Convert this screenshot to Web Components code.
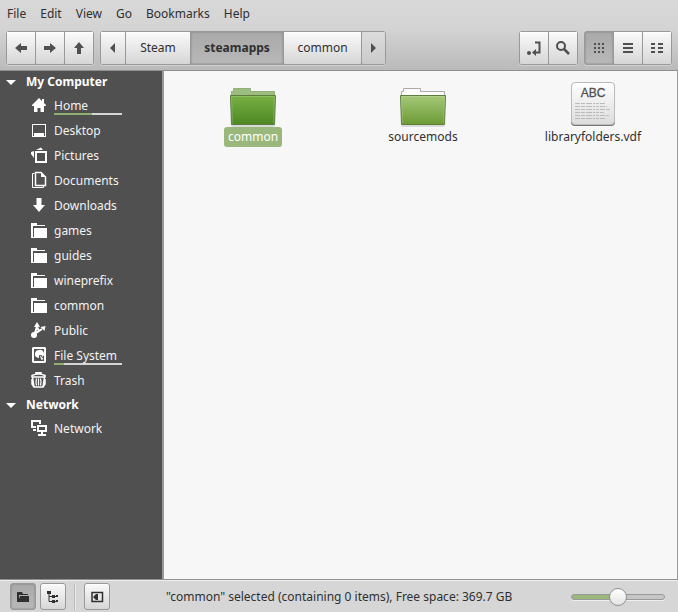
<!DOCTYPE html>
<html lang="en">
<head>
<meta charset="utf-8">
<title>steamapps</title>
<style>
html, body { height: 100%; }
body { margin: 0; font: 12px/20px "Noto Sans", sans-serif; color: #303030; background: #d6d6d6; }
</style>
</head>
<body>
<file-manager>
  <menu-bar slot="menu"></menu-bar>
  <tool-bar slot="tools"></tool-bar>
  <side-bar slot="side">
    <side-section label="My Computer">
      <side-item icon="home" style="--used:56%" usage>Home</side-item>
      <side-item icon="desktop">Desktop</side-item>
      <side-item icon="pictures">Pictures</side-item>
      <side-item icon="documents">Documents</side-item>
      <side-item icon="downloads">Downloads</side-item>
      <side-item icon="folder">games</side-item>
      <side-item icon="folder">guides</side-item>
      <side-item icon="folder">wineprefix</side-item>
      <side-item icon="folder">common</side-item>
      <side-item icon="public">Public</side-item>
      <side-item icon="disk" style="--used:14%" usage>File System</side-item>
      <side-item icon="trash">Trash</side-item>
    </side-section>
    <side-section label="Network">
      <side-item icon="network">Network</side-item>
    </side-section>
  </side-bar>
  <file-grid slot="files">
    <file-item icon="bigopen" selected>common</file-item>
    <file-item icon="bigfolder">sourcemods</file-item>
    <file-item icon="textfile">libraryfolders.vdf</file-item>
  </file-grid>
  <status-bar slot="status">"common" selected (containing 0 items), Free space: 369.7 GB</status-bar>
</file-manager>
<script>
const bigFolder = (a, b, tab, line) => `<defs><linearGradient id="g" x2="0" y2="1"><stop stop-color="${a}"/><stop offset="1" stop-color="${b}"/></linearGradient></defs>
<g transform="translate(0 2)"><path d="M2.500 41.500h43" stroke="#000" stroke-opacity=".12" stroke-width="3"/>
<path d="M2.500 14V7.500H4.500V4.500H21.500V7.500H45.500V14" fill="${tab}" stroke="${line}"/>
<path d="M1.500 11.500H46.500L45.500 40.500H2.500Z" fill="url(#g)" stroke="#5c7d3c"/>
<path d="M2.500 12.500H45.500M2.500 12.500L3.500 39.500M45.500 12.500L44.500 39.500" stroke="#fff" stroke-opacity=".18" fill="none"/></g>`;
const icons = {
  left: [16, '<path d="M2 8l6-5v3h6v4H8v3z"/>'],
  right: [16, '<path d="M14 8L8 3v3H2v4h6v3z"/>'],
  up: [16, '<path d="M8 2l5 6h-3v6H6V8H3z"/>'],
  prev: [16, '<path d="M10 3v10L5 8z"/>'],
  next: [16, '<path d="M5 3v10l5-5z"/>'],
  location: [16, '<circle cx="3" cy="13" r="2"/><path d="M9 2.500h4.500v10H10" fill="none" stroke="currentColor" stroke-width="2"/><path d="M6 12.500l4-3.500v7z"/>'],
  search: [16, '<circle cx="6" cy="6" r="4" fill="none" stroke="currentColor" stroke-width="2"/><path d="M9 9l5 5" stroke="currentColor" stroke-width="2.500"/>'],
  grid: [16, [3,7,11].map(x => [3,7,11].map(y => `<path d="M${x} ${y}h2v2h-2z"/>`).join('')).join('')],
  list: [16, '<path d="M3 3h10v2H3zM3 7h10v2H3zM3 11h10v2H3z"/>'],
  compact: [16, '<path d="M2 3h4v2H2zM2 7h4v2H2zM2 11h4v2H2zM9 3h5v2H9zM9 7h5v2H9zM9 11h5v2H9z"/>'],
  home: [16, '<path d="M8 1l3 3V2h2v4l2 2v1h-2v6H9.500v-4h-3v4H3V9H1V8z"/>'],
  desktop: [16, '<path fill-rule="evenodd" d="M1 2h14v13H1zM2 3v11h1v-3h10v3h1V3z"/><path d="M3 11h10v3H3z"/>'],
  pictures: [16, '<path fill-rule="evenodd" d="M4 4h12v12H4zM6 6v8h8V6z"/><path d="M5 3l5-2.500L12 3zM3 4v7L0 7V5z"/>'],
  documents: [16, '<path d="M3.500 1.500H1.500V15.500H12.500V14" fill="none" stroke="currentColor"/><path d="M4.500 .5H10L14.500 5V13.500H4.500Z" fill="none" stroke="currentColor" stroke-width="1.500"/><path d="M10 0l5 5h-5z"/>'],
  downloads: [16, '<path d="M5.500 1h5v7H14l-6 7-6-7h3.500z"/>'],
  folder: [16, '<path d="M0 1h6v2h8v1H2v12H0z"/><path d="M3 6h13v10H1v-1h2z"/>'],
  public: [16, '<circle cx="3" cy="13" r="3"/><path d="M4 11L6 4.500M5 11L11 7M6 5l2 4 3-2" stroke="currentColor" stroke-width="2" fill="none"/><path d="M6 0l3 5H3zM14.500 4l-1 5-4-4z"/>'],
  disk: [16, '<path fill-rule="evenodd" d="M2 0h12l1 1v14l-1 1H2l-1-1V1zM3 2v12h10V2z"/><path d="M8 3a4 4 0 0 0-2 7.500L8 11V8h2.500l1 2A4 4 0 0 0 8 3zM8.500 8l4 4-2 1z"/>'],
  trash: [16, '<path d="M5 2V.7h5V2M1 3.500Q7.500 .5 14 3.500V5H1ZM1.500 5l1.500 10h9l1.500-10M1 7v5l2 3M14 7v5l-2 3" fill="none" stroke="currentColor" stroke-width="1.500"/><path d="M5.500 6.500Q4.500 10 5.500 13.500M7.500 6.500v7M9.500 6.500Q10.500 10 9.500 13.500" fill="none" stroke="currentColor" stroke-width="1.200"/>'],
  network: [16, '<path d="M5 7H1V1h8v3M2 10h3" fill="none" stroke="currentColor" stroke-width="2"/><path fill-rule="evenodd" d="M6 5h10v7H6zM8 7v3h6V7z"/><path d="M10 12h2v2h3v2H7v-2h3z"/>'],
  places: [16, '<path d="M2 3h5l1 2h5v1H4v7H2z"/><path d="M5 7h9v6H3z"/>'],
  tree: [16, '<path d="M4 3v9.500h9M4 7.500h9" fill="none" stroke="currentColor"/><path d="M2 2h4v3H2zM7 6h3v3H7zM11 6h2v1h-2zM7 11h3v3H7zM11 11h2v1h-2z"/>'],
  panel: [16, '<path d="M3 3.500h10.500v9H3z" fill="none" stroke="currentColor" stroke-width="1.500"/><path d="M8 5v6H7L4 8l3-3zM8 5h1v6H8z"/>'],
  bigopen: [48, bigFolder('#79b045', '#4d8822', '#9cbd80', '#92ae79')],
  bigfolder: [48, bigFolder('#a5c878', '#6c9b35', '#fcfcfc', '#aaa')],
  textfile: [48, `<defs><linearGradient id="g" x2="0" y2="1"><stop stop-color="#fff"/><stop offset="1" stop-color="#dcdcdc"/></linearGradient></defs>
<rect x="2" y="1" width="44" height="43" rx="4" fill="#777"/><rect x="2.500" y=".5" width="43" height="42" rx="3.500" fill="url(#g)" stroke="#bbb"/>
<text x="24" y="15" text-anchor="middle" font-family="Liberation Sans,sans-serif" font-size="12" fill="#505050" stroke="#505050" stroke-width=".3">ABC</text>
<g stroke="#bbb" stroke-dasharray="5 1 4 1 6 1 2 1 3 1"><path d="M6 21.500h31M6 24.500h32M6 27.500h36M6 30.500h29M6 33.500h34M6 36.500h31"/></g>`]
};
const define = (name, html, setup) => {
  const template = document.createElement('template');
  template.innerHTML = html;
  customElements.define(name, class extends HTMLElement {
    constructor() {
      super();
      this.attachShadow({ mode: 'open' }).append(template.content.cloneNode(true));
    }
    connectedCallback() { if (setup) setup(this, this.shadowRoot); }
  });
};
const makeIcon = name => {
  const icon = document.createElement('fm-icon');
  icon.setAttribute('name', name);
  return icon;
};

define('fm-icon', `<style>:host{display:block;flex:none}svg{display:block;overflow:visible;fill:currentColor}</style><svg aria-hidden="true"></svg>`, (host, root) => {
  const [size, body] = icons[host.getAttribute('name')];
  const svg = root.querySelector('svg');
  svg.setAttribute('viewBox', `0 0 ${size} ${size}`);
  svg.setAttribute('width', size);
  svg.setAttribute('height', size);
  svg.innerHTML = body;
});

define('file-manager', `<style>
:host{display:flex;flex-direction:column;min-height:100vh}
header{background:linear-gradient(#d8d8d8,#d4d4d4 40%,#bababa);border-bottom:1px solid #8f8f8f}
.middle{flex:1;display:flex}
main{flex:1;min-width:0;background:#f7f7f7;border-left:2px solid #999;border-right:1px solid #999}
</style><header><slot name="menu"></slot><slot name="tools"></slot></header>
<div class="middle"><slot name="side"></slot><main><slot name="files"></slot></main></div>
<slot name="status"></slot>`);

define('menu-bar', `<style>
:host{display:block}
nav{display:flex;gap:14px;padding:4px 7px}
button{border:0;padding:0;background:none;font:inherit;color:inherit}
</style><nav aria-label="Menu"><button>File</button><button>Edit</button><button>View</button><button>Go</button><button>Bookmarks</button><button>Help</button></nav>`);

define('button-group', `<style>
:host{display:flex;box-sizing:border-box;height:34px;border:1px solid #999;border-radius:3px;background:#999;gap:1px;box-shadow:0 1px #ffffff50}
</style><slot></slot>`);

define('tool-button', `<style>
:host{display:flex}
button{flex:1;box-sizing:border-box;min-width:28px;padding:0 var(--pad,0px);display:flex;align-items:center;justify-content:center;border:0;font:inherit;color:#303030;background:linear-gradient(#fafafa,#d6d6d6);box-shadow:inset 0 1px #fff;border-radius:1px}
:host([icon]) button{color:#505050}
:host([narrow]) button{min-width:24px}
:host([active]) button{background:linear-gradient(#a9a9a9,#b8b8b8);box-shadow:inset 0 0 2px #777}
:host([bold]) button{font-weight:bold}
:host([dim]) button{min-width:23px;background:linear-gradient(#dcdcdc,#cacaca);box-shadow:none}
:host([boxed]) button{min-width:26px;height:27px;border:1px solid #999;border-radius:3px;color:#303030}
</style><button><slot></slot></button>`, (host, root) => {
  const name = host.getAttribute('icon');
  const button = root.querySelector('button');
  if (name) {
    button.append(makeIcon(name));
    button.setAttribute('aria-label', host.getAttribute('label'));
  }
  if (host.hasAttribute('active')) button.setAttribute('aria-pressed', 'true');
});

define('tool-bar', `<style>
:host{display:flex;gap:6px;padding:3px 6px 5px}
.space{flex:1}
.path{--pad:12px}
.first{min-width:64px}
.current{min-width:92px}
.last{min-width:77px}
</style>
<button-group><tool-button icon="left" label="Back"></tool-button><tool-button icon="right" label="Forward"></tool-button><tool-button icon="up" label="Up"></tool-button></button-group>
<button-group><tool-button narrow icon="prev" label="Scroll left"></tool-button><tool-button class="path first">Steam</tool-button><tool-button class="path current" active bold>steamapps</tool-button><tool-button class="path last">common</tool-button><tool-button narrow dim icon="next" label="Scroll right"></tool-button></button-group>
<div class="space"></div>
<button-group><tool-button icon="location" label="Edit location"></tool-button><tool-button icon="search" label="Search"></tool-button></button-group>
<button-group><tool-button active icon="grid" label="Icon view"></tool-button><tool-button icon="list" label="List view"></tool-button><tool-button icon="compact" label="Compact view"></tool-button></button-group>`);

define('side-bar', `<style>:host{display:block;width:162px;flex:none;background:#505050;color:#f2f2f2}</style><nav aria-label="Places"><slot></slot></nav>`);

define('side-section', `<style>
:host{display:block;margin-bottom:1px}
button{display:flex;align-items:center;gap:10px;width:100%;height:22px;padding:0 6px;border:0;background:none;font:inherit;font-weight:bold;color:#fff}
i{border:5px solid transparent;border-top-color:currentColor;border-bottom:0}
</style><button aria-expanded="true"><i></i><span></span></button><slot></slot>`, (host, root) => {
  root.querySelector('span').textContent = host.getAttribute('label');
});

define('side-item', `<style>
:host{display:block}
a{display:flex;gap:7px;height:25px;padding-left:31px;color:inherit;text-decoration:none}
fm-icon{margin-top:4px;color:#fff}
span{position:relative;width:68px;line-height:25px;white-space:nowrap}
:host([usage]) span::after{content:"";position:absolute;left:0;right:0;top:20px;height:2px;background:linear-gradient(90deg,#8fae70 var(--used),#d6d6d6 var(--used))}
</style><a href="#"><span><slot></slot></span></a>`, (host, root) => {
  root.querySelector('a').prepend(makeIcon(host.getAttribute('icon')));
});

define('file-grid', `<style>:host{display:grid;grid-template-columns:repeat(auto-fill,170px);margin-right:-1px;padding:11px 0 0 4px}</style><slot></slot>`);

define('file-item', `<style>
:host{display:flex;justify-content:center}
button{display:flex;flex-direction:column;align-items:center;border:0;padding:0;background:none;font:inherit;color:inherit}
div{height:45px}
span{padding:0 4px;border-radius:3px}
:host([selected]) span{background:#9ab87c;color:#fff}
</style><button><div></div><span><slot></slot></span></button>`, (host, root) => {
  root.querySelector('div').append(makeIcon(host.getAttribute('icon')));
});

define('status-bar', `<style>
:host{display:flex;align-items:center;gap:4px;padding:3px 13px 2px 10px;border-top:1px solid #8f8f8f;box-shadow:inset 0 1px #eee;background:#d6d6d6}
hr{width:2px;height:26px;margin:0 4px;border:0;background:linear-gradient(90deg,#bbb 50%,#e8e8e8 50%)}
p{flex:1;margin:0 0 0 52px}
input{appearance:none;width:94px;height:18px;margin:0;background:none}
input::-webkit-slider-runnable-track{box-sizing:border-box;height:6px;border:1px solid #999;border-radius:3px;background:linear-gradient(90deg,#9ab87c 50%,#c6c6c6 50%);box-shadow:0 1px #eee}
input::-webkit-slider-thumb{appearance:none;box-sizing:border-box;width:18px;height:18px;margin-top:-7px;border:1px solid #8f8f8f;border-radius:9px;background:linear-gradient(#fff,#e4e4e4)}
</style><tool-button boxed active icon="places" label="Places"></tool-button><tool-button boxed icon="tree" label="Tree"></tool-button><hr><tool-button boxed icon="panel" label="Hide sidebar"></tool-button><p><slot></slot></p><input type="range" min="0" max="100" value="50" aria-label="Zoom">`);
</script>
</body>
</html>
